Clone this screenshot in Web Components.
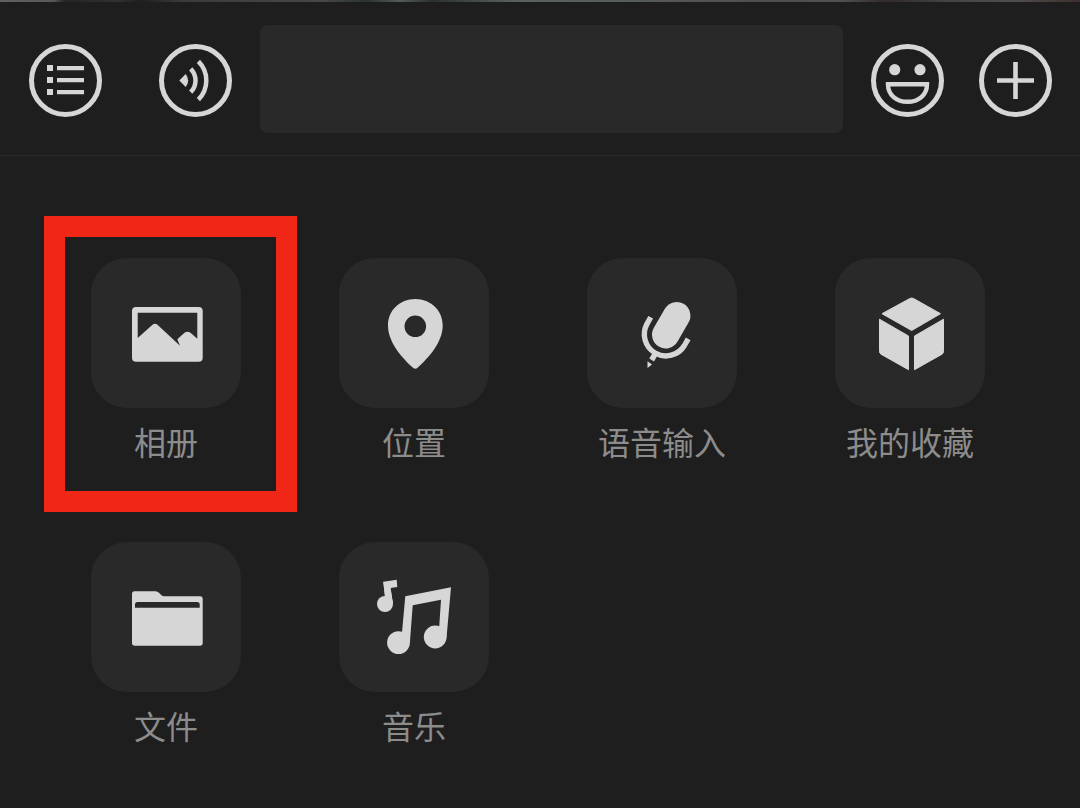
<!DOCTYPE html>
<html lang="zh-CN">
<head>
<meta charset="utf-8">
<meta name="viewport" content="width=device-width, initial-scale=1">
<title>聊天附件面板</title>
<style>
  body {
    margin: 0;
    background: #1e1e1e;
    color: #8c8c8c;
    font-family: "Noto Sans CJK SC", sans-serif;
    --icon: #d6d6d6;
    --surface: #292929;
  }
</style>
</head>
<body>
<chat-panel>
  <chat-toolbar slot="toolbar">
    <round-button slot="start" label="菜单">
      <svg viewBox="0 0 73 73"><path fill="currentColor" d="M18 21h6v6h-6zM18 33h6v6h-6zM18 45h6v6h-6zM28 22h27v4.300H28zM28 34h27v4.300H28zM28 46h27v4.300H28z"/></svg>
    </round-button>
    <round-button slot="start" label="语音">
      <svg viewBox="0 0 73 73"><path fill="currentColor" d="M20.300 36.500 26.700 30Q31.500 36.500 26.700 43z"/><path fill="none" stroke="currentColor" stroke-width="4.500" d="M31.700 24.800A16.600 16.600 0 0 1 31.700 48.200M39.400 17.400A27 27 0 0 1 39.400 55.600"/></svg>
    </round-button>
    <round-button slot="end" label="表情">
      <svg viewBox="0 0 73 73"><g fill="currentColor"><circle cx="23.700" cy="25.700" r="5.600"/><circle cx="49" cy="25.700" r="5.600"/></g><path fill="none" stroke="currentColor" stroke-width="4.400" d="M17 40.200H56C56 51 47.500 57.800 36.500 57.800S17 51 17 40.200z"/></svg>
    </round-button>
    <round-button slot="end" label="更多">
      <svg viewBox="0 0 73 73"><path fill="none" stroke="currentColor" stroke-width="4.600" d="M18 36.500H55M36.500 18V55"/></svg>
    </round-button>
  </chat-toolbar>

  <panel-item marked>
    <svg slot="icon" viewBox="0 0 150 150"><path fill="currentColor" fill-rule="evenodd" d="M45 49H107.700Q111.700 49 111.700 53V99.700Q111.700 103.700 107.700 103.700H45Q41 103.700 41 99.700V53Q41 49 45 49zM46.700 54.700V80L61.500 66.800Q64 64.800 66.500 66.800L89 87.700 86.300 81.300 93.500 74.800Q96.500 72.800 99.500 74.800L106.300 80.800V54.700z"/></svg>相册</panel-item>
  <panel-item>
    <svg slot="icon" viewBox="0 0 150 150"><path fill="currentColor" fill-rule="evenodd" d="M76.300 41C92 41 103.700 52.500 103.700 67.500C103.700 84 90 99.500 78.600 109.700Q76.300 111.700 74 109.700C62.600 99.500 49 84 49 67.500C49 52.500 60.600 41 76.300 41zM76.300 57.500a10.800 10.800 0 1 0 0 21.600a10.800 10.800 0 1 0 0-21.600z"/></svg>位置</panel-item>
  <panel-item>
    <svg slot="icon" viewBox="0 0 150 150"><g fill="none" stroke="currentColor"><path stroke-width="27.400" stroke-linecap="round" d="M89.700 57.700 78.700 76.700"/><path stroke-width="5.400" d="M63.700 59.300 60 65.900A21.600 21.600 0 0 0 97.400 87.500L101.200 80.900"/><path stroke-width="5.400" d="M68.500 95.500 64.600 102"/></g><path fill="currentColor" d="M60.500 103.300 65 106.500 60.500 110z"/></svg>语音输入</panel-item>
  <panel-item>
    <svg slot="icon" viewBox="0 0 150 150"><g fill="currentColor" stroke="currentColor" stroke-width="1" stroke-linejoin="round"><path d="M74.700 40.600Q76.700 39.400 78.700 40.600L105.500 55.700 76.700 72.500 47 55.700z"/><path d="M44.500 61.200 73.500 78V111.700L46 96.200Q44.500 95.300 44.500 93.600z"/><path d="M108.500 61.200 79.500 78V111.700L107 96.200Q108.500 95.300 108.500 93.600z"/></g></svg>我的收藏</panel-item>
  <panel-item>
    <svg slot="icon" viewBox="0 0 150 150"><path fill="currentColor" fill-rule="evenodd" d="M43.500 49.300H64.500Q66.500 49.300 68 50.800L70.500 53.300Q71.500 54.300 73 54.300H109Q111.700 54.300 111.700 57V101Q111.700 103.700 109 103.700H44Q41 103.700 41 101V52Q41 49.300 43.500 49.300zM46.500 60Q44 60 44 62.500V65.700H108.700V62.500Q108.700 60 106.200 60z"/></svg>文件</panel-item>
  <panel-item>
    <svg slot="icon" viewBox="0 0 150 150"><g fill="currentColor"><circle cx="46" cy="62" r="8"/><path d="M44.300 39.700 57.700 37.700 58.300 45 51.500 46 54 62 46 56z"/><path d="M44.300 39.700 46.300 56 54 62 51.500 46z"/><circle cx="59.500" cy="100.600" r="11.400"/><circle cx="96.200" cy="95" r="11.400"/><path d="M62.900 91.500 66.300 54.300 112 45.300 107.600 95 96.200 90 100.200 85 102 57.700 73.700 63.300 70.900 100.600 62 98z"/></g></svg>音乐</panel-item>
</chat-panel>

<template id="chat-panel-template">
  <style>
    :host { display: block; min-height: 100vh; box-sizing: border-box; }
    .backdrop {
      height: 2px;
      background: linear-gradient(90deg, #606163 0, #55575a 5%, #232425 6%, #303131 11%, #1d1f1f 13%, #3a3c3c 17%, #444848 30%, #2c3131 34%, #555b5b 37%, #2c3030 40%, #5b6161 48%, #565b5b 58%, #4f4f4f 70%, #524f4f 78%, #302b2a 82%, #464343 88%, #504e4d 94%, #3c302c 100%);
    }
    .grid {
      display: grid;
      grid-template-columns: repeat(4, 1fr);
      row-gap: 81px;
      padding: 102px 46px 60px 42px;
    }
  </style>
  <div class="backdrop"></div>
  <slot name="toolbar"></slot>
  <main class="grid"><slot></slot></main>
</template>

<template id="chat-toolbar-template">
  <style>
    :host {
      display: flex;
      align-items: center;
      gap: 28px;
      padding: 23px 28px 22px 29px;
      border-bottom: 1px solid #282828;
    }
    .group { display: flex; padding-top: 2px; }
    .start { gap: 57px; }
    .end { gap: 35px; }
    input {
      flex: 1;
      min-width: 0;
      height: 108px;
      box-sizing: border-box;
      padding: 0 24px;
      border: 0;
      border-radius: 8px;
      outline: none;
      background: var(--surface);
      color: var(--icon);
      font: 40px "Noto Sans CJK SC", sans-serif;
    }
  </style>
  <div class="group start"><slot name="start"></slot></div>
  <input type="text" aria-label="消息">
  <div class="group end"><slot name="end"></slot></div>
</template>

<template id="round-button-template">
  <style>
    :host { display: block; }
    button {
      display: block;
      width: 73px;
      height: 73px;
      padding: 0;
      border: 5px solid var(--icon);
      border-radius: 50%;
      background: none;
      color: var(--icon);
      cursor: pointer;
    }
    ::slotted(svg) { display: block; width: 73px; height: 73px; margin: -5px; }
  </style>
  <button type="button"><slot></slot></button>
</template>

<template id="panel-item-template">
  <style>
    :host { display: block; position: relative; }
    button {
      display: flex;
      flex-direction: column;
      align-items: center;
      gap: 13px;
      width: 100%;
      padding: 0;
      border: 0;
      background: none;
      color: inherit;
      font: inherit;
      font-size: 32px;
      line-height: 40px;
      cursor: pointer;
    }
    .tile {
      width: 150px;
      height: 150px;
      border-radius: 36px;
      background: var(--surface);
      color: var(--icon);
    }
    ::slotted(svg) { display: block; width: 150px; height: 150px; }
    :host([marked])::after {
      content: "";
      position: absolute;
      inset: -42px -7px -51px 2px;
      border: 21px solid #f02716;
      pointer-events: none;
    }
  </style>
  <button type="button">
    <span class="tile"><slot name="icon"></slot></span>
    <span><slot></slot></span>
  </button>
</template>

<script>
  class TemplateElement extends HTMLElement {
    constructor() {
      super();
      const template = document.getElementById(this.localName + "-template");
      this.attachShadow({ mode: "open" }).append(template.content.cloneNode(true));
    }
  }
  class ChatPanel extends TemplateElement {}
  class ChatToolbar extends TemplateElement {}
  class PanelItem extends TemplateElement {}
  class RoundButton extends TemplateElement {
    connectedCallback() {
      this.shadowRoot.querySelector("button").setAttribute("aria-label", this.getAttribute("label"));
    }
  }
  customElements.define("chat-panel", ChatPanel);
  customElements.define("chat-toolbar", ChatToolbar);
  customElements.define("round-button", RoundButton);
  customElements.define("panel-item", PanelItem);
</script>
</body>
</html>
